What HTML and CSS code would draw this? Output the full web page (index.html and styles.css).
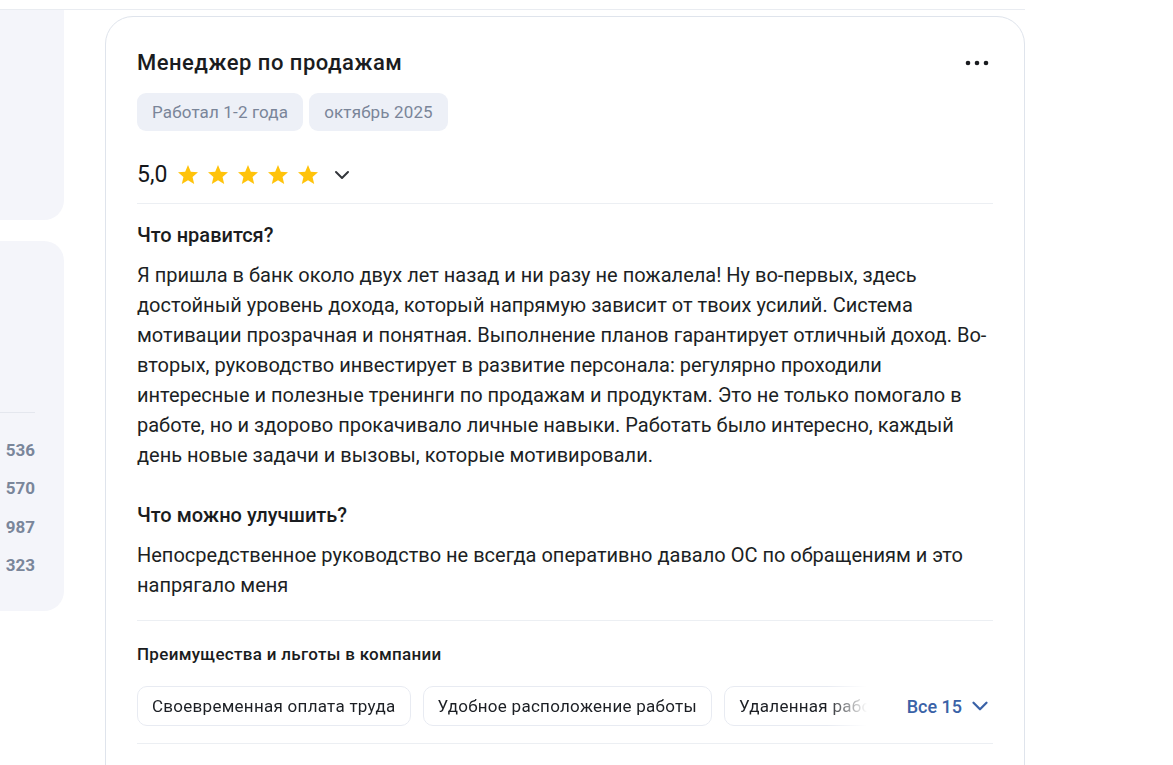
FILE: index.html
```html
<!DOCTYPE html>
<html lang="ru">
<head>
<meta charset="utf-8">
<link rel="stylesheet" href="styles.css">
</head>
<body>
<div class="page">
  <div class="topbar"></div>
  <div class="main">
    <aside class="side">
      <div class="panel p1"></div>
      <div class="panel p2">
        <div class="p2-head"></div>
        <ul class="counts">
          <li>536</li>
          <li>570</li>
          <li>987</li>
          <li>323</li>
        </ul>
      </div>
    </aside>
    <article class="card">
      <div class="card-head">
        <h2 class="title">Менеджер по продажам</h2>
        <button class="more" aria-label="Ещё">
          <svg width="28" height="28" viewBox="0 0 28 28"><circle cx="5" cy="14" r="2.3"/><circle cx="14" cy="14" r="2.3"/><circle cx="23" cy="14" r="2.3"/></svg>
        </button>
      </div>
      <div class="tags">
        <span class="tag">Работал 1-2 года</span>
        <span class="tag">октябрь 2025</span>
      </div>
      <div class="rating">
        <span class="score">5,0</span>
        <span class="stars">
          <svg viewBox="0 0 24 24"><path d="M12 17.27L18.18 21l-1.64-7.03L22 9.24l-7.19-.61L12 2 9.19 8.63 2 9.24l5.46 4.73L5.82 21z"/></svg>
          <svg viewBox="0 0 24 24"><path d="M12 17.27L18.18 21l-1.64-7.03L22 9.24l-7.19-.61L12 2 9.19 8.63 2 9.24l5.46 4.73L5.82 21z"/></svg>
          <svg viewBox="0 0 24 24"><path d="M12 17.27L18.18 21l-1.64-7.03L22 9.24l-7.19-.61L12 2 9.19 8.63 2 9.24l5.46 4.73L5.82 21z"/></svg>
          <svg viewBox="0 0 24 24"><path d="M12 17.27L18.18 21l-1.64-7.03L22 9.24l-7.19-.61L12 2 9.19 8.63 2 9.24l5.46 4.73L5.82 21z"/></svg>
          <svg viewBox="0 0 24 24"><path d="M12 17.27L18.18 21l-1.64-7.03L22 9.24l-7.19-.61L12 2 9.19 8.63 2 9.24l5.46 4.73L5.82 21z"/></svg>
        </span>
        <svg class="chev" viewBox="0 0 24 24"><path d="M6 9l6 6 6-6"/></svg>
      </div>
      <section class="block">
        <h3 class="block-title">Что нравится?</h3>
        <p class="block-text">Я пришла в банк около двух лет назад и ни разу не пожалела! Ну во-первых, здесь достойный уровень дохода, который напрямую зависит от твоих усилий. Система мотивации прозрачная и понятная. Выполнение планов гарантирует отличный доход. Во-вторых, руководство инвестирует в развитие персонала: регулярно проходили интересные и полезные тренинги по продажам и продуктам. Это не только помогало в работе, но и здорово прокачивало личные навыки. Работать было интересно, каждый день новые задачи и вызовы, которые мотивировали.</p>
        <h3 class="block-title second">Что можно улучшить?</h3>
        <p class="block-text">Непосредственное руководство не всегда оперативно давало ОС по обращениям и это напрягало меня</p>
      </section>
      <section class="perks">
        <h4 class="perks-title">Преимущества и льготы в компании</h4>
        <div class="perks-row">
          <div class="chips">
            <span class="chip">Своевременная оплата труда</span>
            <span class="chip">Удобное расположение работы</span>
            <span class="chip">Удаленная работа</span>
          </div>
          <button class="all">Все 15
            <svg viewBox="0 0 24 24"><path d="M6 9l6 6 6-6"/></svg>
          </button>
        </div>
      </section>
    </article>
  </div>
</div>
</body>
</html>
```

FILE: styles.css
```css
* { box-sizing: border-box; }
html, body { margin: 0; padding: 0; background: #fff; }
body {
  font-family: Roboto, "Noto Sans", "Liberation Sans", sans-serif;
  color: #1c1f24;
  overflow: hidden;
}
.page { width: 1173px; height: 765px; overflow: hidden; }
.topbar {
  width: 1025px;
  height: 10px;
  border-bottom: 1px solid #e9ecf1;
}
.main {
  display: flex;
  gap: 41px;
  align-items: flex-start;
}
.side { width: 64px; flex: none; }
.panel { background: #f4f5fa; }
.p1 { height: 210px; border-radius: 0 0 20px 0; }
.p2 {
  margin-top: 21px;
  height: 370px;
  border-radius: 0 20px 20px 0;
}
.p2-head {
  height: 172px;
  margin-right: 29px;
  border-bottom: 1px solid #e4e7ee;
}
.counts {
  list-style: none;
  margin: 18px 0 0;
  padding: 0 29px 0 0;
  text-align: right;
}
.counts li {
  font-size: 17px;
  font-weight: 700;
  line-height: 38.4px;
  color: #7a869a;
}
.card {
  width: 920px;
  flex: none;
  margin-top: 6px;
  height: 900px;
  border: 1px solid #dfe4ec;
  border-radius: 28px;
  padding: 32px 31px 0 31px;
}
.card-head {
  display: flex;
  justify-content: space-between;
  align-items: center;
}
.title {
  margin: 0;
  font-size: 22px;
  letter-spacing: 0.5px;
  font-weight: 500;
  line-height: 28px;
  color: #1a1c20;
}
.more {
  border: 0;
  background: none;
  padding: 0;
  margin-right: 2px;
  width: 28px;
  height: 28px;
  display: flex;
}
.more svg { fill: #1a1c20; }
.tags {
  display: flex;
  gap: 6px;
  margin-top: 16px;
}
.tag {
  background: #edf0f7;
  color: #7a8599;
  font-size: 17px;
  letter-spacing: 0.15px;
  line-height: 38px;
  padding: 0 15px;
  border-radius: 9px;
}
.rating {
  display: flex;
  align-items: center;
  height: 32px;
  margin-top: 28px;
}
.score {
  font-size: 23px;
  line-height: 32px;
  color: #15171a;
}
.stars {
  display: flex;
  gap: 6px;
  margin-left: 9px;
}
.stars svg {
  width: 24px;
  height: 24px;
  fill: #ffc30b;
}
.chev {
  width: 24px;
  height: 24px;
  margin-left: 10px;
  fill: none;
  stroke: #33363b;
  stroke-width: 2;
  stroke-linecap: round;
  stroke-linejoin: round;
}
.block {
  margin-top: 12px;
  border-top: 1px solid #eceff3;
  padding-top: 17px;
  padding-bottom: 20px;
  border-bottom: 1px solid #eceff3;
}
.block-title {
  margin: 0;
  font-size: 20px;
  font-weight: 500;
  line-height: 28px;
  color: #1a1c20;
}
.block-title.second { margin-top: 31px; }
.block-text {
  margin: 11px 0 0;
  font-size: 20px;
  letter-spacing: 0;
  line-height: 30px;
  color: #1c1f24;
}
.perks {
  padding-top: 21px;
  padding-bottom: 17px;
  border-bottom: 1px solid #eceff3;
}
.perks-title {
  margin: 0;
  font-size: 17px;
  letter-spacing: 0.3px;
  font-weight: 500;
  line-height: 24px;
  color: #1a1c20;
}
.perks-row {
  display: flex;
  align-items: center;
  margin-top: 20px;
}
.chips {
  display: flex;
  gap: 12px;
  width: 735px;
  overflow: hidden;
  white-space: nowrap;
  -webkit-mask-image: linear-gradient(to right, #000 690px, transparent 730px);
  mask-image: linear-gradient(to right, #000 690px, transparent 730px);
}
.chip {
  flex: none;
  border: 1px solid #e8ebf2;
  border-radius: 10px;
  padding: 0 14px;
  font-size: 17px;
  letter-spacing: 0.27px;
  line-height: 38px;
  color: #1c1f24;
}
.all {
  margin-left: auto;
  border: 0;
  background: none;
  padding: 0;
  display: flex;
  align-items: center;
  gap: 5px;
  font-family: inherit;
  font-size: 18px;
  font-weight: 500;
  color: #3a62a7;
}
.all svg {
  width: 26px;
  height: 26px;
  fill: none;
  stroke: #3a62a7;
  stroke-width: 2.1;
  stroke-linecap: round;
  stroke-linejoin: round;
}
```
